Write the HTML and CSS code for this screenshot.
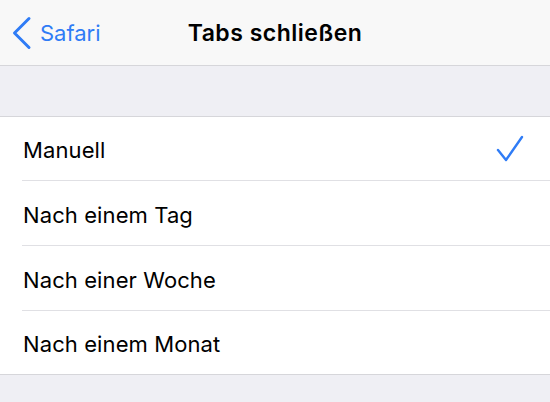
FILE: index.html
```html
<!DOCTYPE html>
<html>
<head>
<meta charset="utf-8">
<link rel="stylesheet" href="styles.css">
</head>
<body>
<div class="nav">
  <div class="back">
    <svg class="chev" width="22" height="34" viewBox="0 0 22 34"><path d="M18 2.5 L3.5 17 L18 31.5" fill="none" stroke="#2f7cf6" stroke-width="3" stroke-linecap="round" stroke-linejoin="round"/></svg>
    <span>Safari</span>
  </div>
  <div class="title">Tabs schließen</div>
</div>
<div class="gap"></div>
<div class="list">
  <div class="row"><span>Manuell</span>
    <svg class="check" width="28" height="28" viewBox="0 0 28 28"><path d="M2 15 L10 25 L26 2" fill="none" stroke="#2f7cf6" stroke-width="2.4" stroke-linecap="round" stroke-linejoin="round"/></svg>
  </div>
  <div class="row"><span>Nach einem Tag</span></div>
  <div class="row"><span>Nach einer Woche</span></div>
  <div class="row"><span>Nach einem Monat</span></div>
</div>
<div class="foot"></div>
</body>
</html>
```
FILE: styles.css
```css
html, body { margin: 0; padding: 0; }
body {
  width: 550px; height: 402px; overflow: hidden;
  background: #efeff4;
  font-family: Inter, "Liberation Sans", sans-serif;
  color: #000;
}
.nav {
  height: 65px;
  background: #f8f8f8;
  border-bottom: 1px solid #d6d6da;
  display: flex; align-items: center; justify-content: center;
  position: relative;
}
.back {
  position: absolute; left: 11px; top: 0; height: 65px;
  display: flex; align-items: center; gap: 7px;
  color: #2f7cf6; font-size: 22px;
}
.chev { display: block; }
.title { font-size: 23px; font-weight: 600; letter-spacing: 0.5px; }
.gap { height: 50px; border-bottom: 1px solid #d6d6da; }
.list { background: #fff; border-bottom: 1px solid #d6d6da; }
.row {
  height: 63px; margin-left: 22px; padding-right: 26px;
  display: flex; align-items: center; justify-content: space-between;
  border-bottom: 1px solid #e0e0e4;
  font-size: 22px; letter-spacing: 0.1px;
}
.row:nth-child(2), .row:nth-child(3) { height: 64px; }
.row span { padding-left: 1px; padding-top: 3px; }
.row:last-child { border-bottom: none; }
.check { display: block; }
```
